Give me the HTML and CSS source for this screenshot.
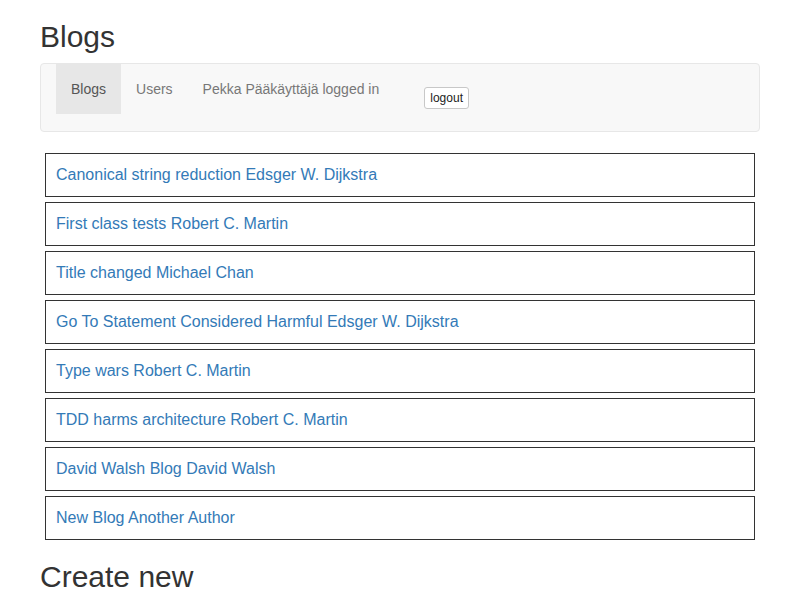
FILE: index.html
```html
<!DOCTYPE html>
<html>
<head>
<meta charset="utf-8">
<title>Blogs</title>
<link rel="stylesheet" href="styles.css">
</head>
<body>
<div class="container">
  <h2 class="title">Blogs</h2>
  <nav class="navbar">
    <ul class="nav">
      <li><a class="nav-link active" href="#">Blogs</a></li>
      <li><a class="nav-link" href="#">Users</a></li>
      <li><span class="nav-text">Pekka Pääkäyttäjä logged in</span></li>
      <li class="nav-form"><button class="btn" type="button">logout</button></li>
    </ul>
  </nav>
  <div class="blog-list">
    <div class="blog"><a href="#">Canonical string reduction Edsger W. Dijkstra</a></div>
    <div class="blog"><a href="#">First class tests Robert C. Martin</a></div>
    <div class="blog"><a href="#">Title changed Michael Chan</a></div>
    <div class="blog"><a href="#">Go To Statement Considered Harmful Edsger W. Dijkstra</a></div>
    <div class="blog"><a href="#">Type wars Robert C. Martin</a></div>
    <div class="blog"><a href="#">TDD harms architecture Robert C. Martin</a></div>
    <div class="blog"><a href="#">David Walsh Blog David Walsh</a></div>
    <div class="blog"><a href="#">New Blog Another Author</a></div>
  </div>
  <h2 class="title">Create new</h2>
</div>
</body>
</html>
```
FILE: styles.css
```css
* { box-sizing: border-box; }
html, body { margin: 0; padding: 0; }
body {
  font-family: "Liberation Sans", Arial, sans-serif;
  font-size: 14px;
  line-height: 1.42857;
  color: #333;
  background: #fff;
}
.container {
  width: 750px;
  margin: 0 auto;
  padding: 0 15px;
}
.title {
  font-size: 30px;
  font-weight: 500;
  line-height: 1.1;
  margin: 20px 0 10px;
}
.navbar {
  background: #f8f8f8;
  border: 1px solid #e7e7e7;
  border-radius: 4px;
  margin-bottom: 20px;
  padding: 0 15px;
}
.nav {
  list-style: none;
  margin: 0;
  padding: 0;
  display: flex;
  align-items: flex-start;
}
.nav-link, .nav-text {
  display: block;
  padding: 15px;
  line-height: 20px;
  color: #777;
  text-decoration: none;
}
.nav-link.active {
  background: #e7e7e7;
  color: #555;
}
.nav-form {
  padding: 23px 0 22px 30px;
}
.btn {
  font-family: "Liberation Sans", Arial, sans-serif;
  font-size: 12px;
  line-height: 18px;
  padding: 1px 5px;
  color: #222;
  background: #fff;
  border: 1px solid #c8c8c8;
  border-radius: 3px;
  display: block;
}
.blog-list {
  display: flex;
  flex-direction: column;
  gap: 5px;
  padding: 1px 5px 0;
  margin-bottom: 20px;
}
.blog {
  border: 1px solid #333;
  padding: 10px;
  font-size: 16px;
  line-height: 22px;
}
.blog a {
  color: #337ab7;
  text-decoration: none;
}
```
